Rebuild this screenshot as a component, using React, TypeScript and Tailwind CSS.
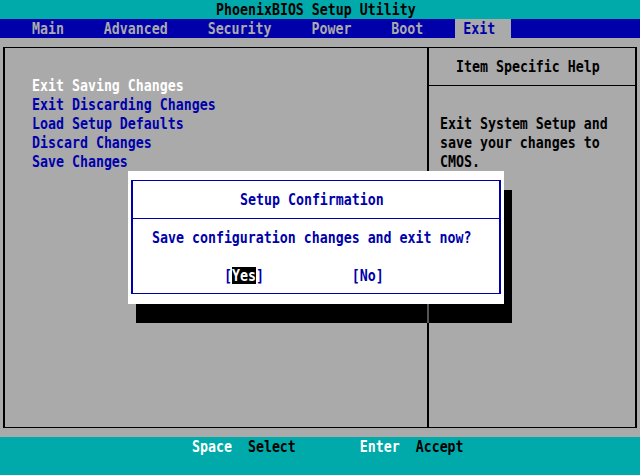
import React from "react";

type TP = { children: React.ReactNode; className?: string };
const T = ({ children, className = "" }: TP) => (
  <span className={"inline-block scale-y-[1.25] whitespace-pre " + className}>{children}</span>
);

export default function App() {
  return (
    <div className="relative w-[640px] h-[475px] overflow-hidden bg-[#aaaaaa] flex flex-col font-['DejaVu_Sans_Mono',monospace] font-bold text-[13.28px] leading-[19px]">
      {/* title */}
      <div className="h-[19px] bg-[#00aaaa] text-black pl-[216px]">
        <T>PhoenixBIOS Setup Utility</T>
      </div>
      {/* menu bar */}
      <div className="h-[19px] bg-[#0000aa] text-[#aaaaaa] flex">
        <T>{"    Main     Advanced     Security     Power     Boot    "}</T>
        <span className="bg-[#aaaaaa] text-[#0000aa]">
          <T>{" Exit  "}</T>
        </span>
      </div>
      {/* main area */}
      <div className="h-[399px] pt-[9px] pl-[3px]">
        <div className="w-[634px] h-[381px] border-x-2 border-y border-black flex">
          <div className="w-[424px] border-r-2 border-black pt-[28px] pl-[27px] flex flex-col">
            <div className="text-white"><T>Exit Saving Changes</T></div>
            <div className="text-[#0000aa]"><T>Exit Discarding Changes</T></div>
            <div className="text-[#0000aa]"><T>Load Setup Defaults</T></div>
            <div className="text-[#0000aa]"><T>Discard Changes</T></div>
            <div className="text-[#0000aa]"><T>Save Changes</T></div>
          </div>
          <div className="flex-1 flex flex-col text-black">
            <div className="h-[38px] border-b border-black pt-[9px] pl-[27px]">
              <T>Item Specific Help</T>
            </div>
            <div className="pt-[28px] pl-[11px] flex flex-col">
              <div><T>Exit System Setup and</T></div>
              <div><T>save your changes to</T></div>
              <div><T>CMOS.</T></div>
            </div>
          </div>
        </div>
      </div>
      {/* footer */}
      <div className="flex-1 bg-[#00aaaa] pl-[192px]">
        <div className="flex">
          <T className="text-white">Space</T>
          <T>{"  "}</T>
          <T className="text-black">Select</T>
          <T>{"        "}</T>
          <T className="text-white">Enter</T>
          <T>{"  "}</T>
          <T className="text-black">Accept</T>
        </div>
      </div>

      {/* shadow */}
      <div className="absolute left-[136px] top-[190px] w-[376px] h-[133px] bg-black">
        <div className="absolute left-[291px] top-0 w-[2px] h-full bg-[#555555]" />
      </div>
      {/* dialog */}
      <div className="absolute left-[128px] top-[171px] w-[376px] h-[133px] bg-white pl-[3px] pt-[9px] text-[#0000aa]">
        <div className="w-[370px] h-[114px] border-x-2 border-y border-[#0000aa] flex flex-col">
          <div className="h-[38px] border-b border-[#0000aa] pt-[9px] pl-[107px]">
            <T>Setup Confirmation</T>
          </div>
          <div className="pt-[9px] pl-[19px]">
            <T>Save configuration changes and exit now?</T>
          </div>
          <div className="pt-[19px] pl-[91px] flex items-center h-[38px]">
            <T>[</T>
            <span className="inline-block bg-black text-white h-[17px] leading-[17px]">
              <T>Yes</T>
            </span>
            <T>{"]           [No]"}</T>
          </div>
        </div>
      </div>
    </div>
  );
}
